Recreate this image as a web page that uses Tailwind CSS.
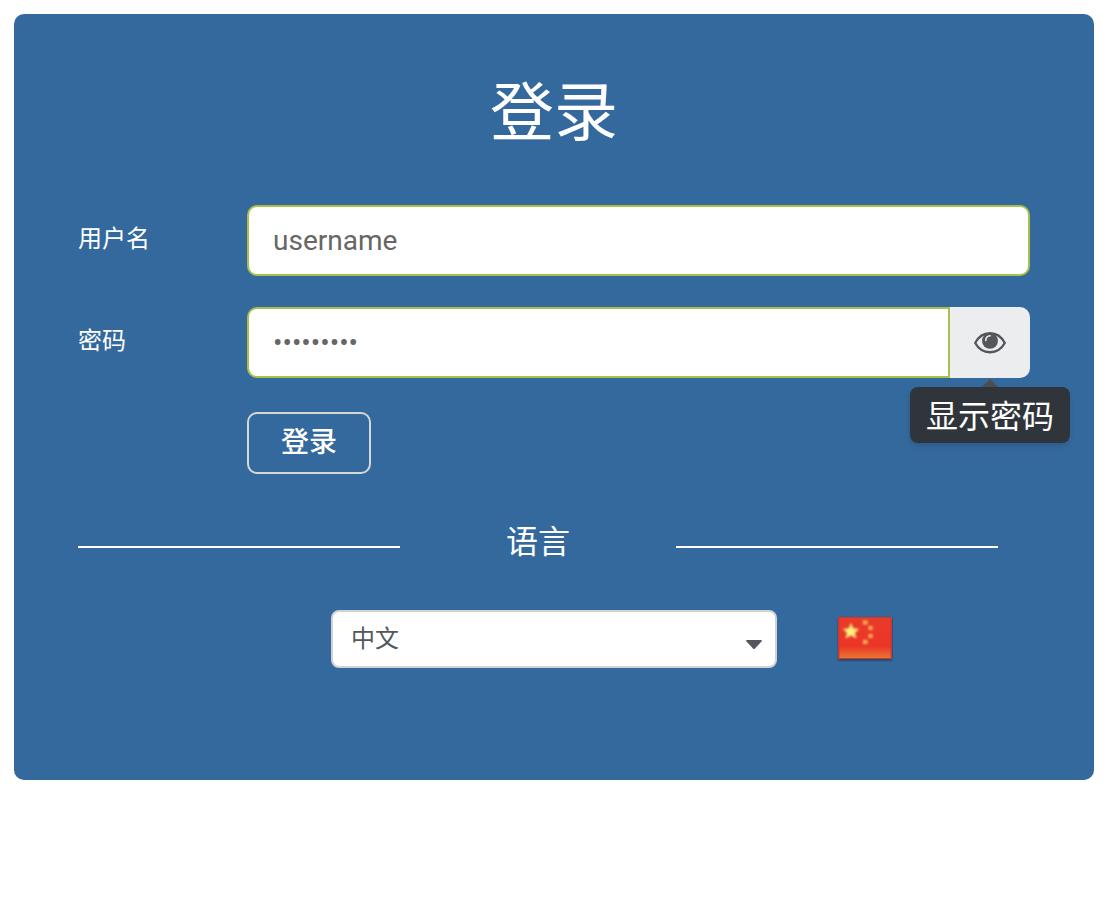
<!DOCTYPE html>
<html lang="zh-CN">
<head>
    <meta charset="UTF-8">
    <meta name="viewport" content="width=device-width, initial-scale=1.0">
    <title>登录</title>
    <script src="https://cdn.jsdelivr.net/npm/@tailwindcss/browser@4"></script>
</head>
<body class="bg-white p-3.5 font-[Roboto,'Noto_Sans_CJK_SC',sans-serif] text-white">
    <main class="rounded-[10px] bg-[#34699d] px-16 pt-14 pb-28">
        <h1 class="mb-[47px] text-center text-[64px] leading-[88px]">登录</h1>

        <form>
            <div class="mb-[31px] flex items-center">
                <label for="username" class="w-[169px] shrink-0 pb-1 text-2xl">用户名</label>
                <input id="username" type="text" placeholder="username" class="h-[71px] min-w-0 flex-1 rounded-[10px] border-2 border-[#a9c14a] bg-white px-6 text-[28px] text-[#666] placeholder:text-[#666] outline-none">
            </div>

            <div class="mb-[34px] flex items-center">
                <label for="password" class="w-[169px] shrink-0 pb-1 text-2xl">密码</label>
                <div class="flex h-[71px] min-w-0 flex-1">
                    <input id="password" type="password" value="password1" class="min-w-0 flex-1 rounded-l-[10px] border-2 border-[#a9c14a] bg-white px-6 text-[28px] text-[#666] outline-none">
                    <div class="relative">
                        <button type="button" id="toggle" aria-label="显示密码" aria-describedby="tip" class="flex h-full w-20 items-center justify-center rounded-r-[10px] bg-[#ecedef]">
                            <svg class="h-6 w-8" viewBox="0 0 32 24" fill="none">
                                <path d="M1.200 12C8 -1 24 -1 30.800 12C24 24.300 8 24.300 1.200 12Z" stroke="#53575b" stroke-width="2.300" stroke-linejoin="round"/>
                                <circle cx="16" cy="9.800" r="8" fill="#53575b"/>
                                <path d="M11.800 9.500C11.800 6.500 13.500 5 16.200 4.800" stroke="#ecedef" stroke-width="1.600" stroke-linecap="round"/>
                            </svg>
                        </button>
                        <div id="tip" role="tooltip" class="absolute top-20 left-1/2 -translate-x-1/2 rounded-lg bg-[#30353b] px-4 pt-1 text-[32px] leading-[52px] whitespace-nowrap shadow-md">
                            <svg class="absolute -top-2 left-1/2 h-2 w-4 -translate-x-1/2" viewBox="0 0 16 8"><path d="M0 8L8 0L16 8Z" fill="#4d4d4d"/></svg>
                            显示密码
                        </div>
                    </div>
                </div>
            </div>

            <button type="submit" class="ml-[169px] rounded-[10px] border-2 border-[#d6d6d6] px-8 text-[28px] leading-[58px] font-medium">登录</button>
        </form>

        <div class="mt-11 mr-8 grid grid-cols-[35fr_30fr_35fr] items-center">
            <hr class="mt-2.5 border-t-2 border-white">
            <h2 class="text-center text-[32px] leading-[48px]">语言</h2>
            <hr class="mt-2.5 border-t-2 border-white">
        </div>

        <div class="mt-11 flex items-center">
            <div class="relative ml-[253px] w-[446px]">
                <select aria-label="语言" class="h-[58px] w-full appearance-none rounded-lg border-2 border-[#d2d2d2] bg-white px-[18px] text-2xl text-[#53575b] outline-none">
                    <option>中文</option>
                </select>
                <svg class="pointer-events-none absolute top-[30px] right-[15px] h-2.5 w-4" viewBox="0 0 16 10"><path d="M1 0H15Q16.500 .3 15.500 1.500L9 8.500Q8 9.500 7 8.500L.5 1.500Q-.5 .3 1 0Z" fill="#53575b"/></svg>
            </div>
            <svg class="ml-[60px] h-[46px] w-14" viewBox="0 0 56 46" role="img" aria-label="中国">
                <defs>
                    <linearGradient id="red" x1="0" y1="0" x2="0" y2="1">
                        <stop offset="0" stop-color="#e93a2a"/>
                        <stop offset=".7" stop-color="#ec3527"/>
                        <stop offset="1" stop-color="#e87532"/>
                    </linearGradient>
                    <filter id="soft" x="-10%" y="-10%" width="120%" height="120%"><feGaussianBlur stdDeviation=".8"/></filter>
                </defs>
                <rect x="1" y="2" width="54.500" height="42.500" rx="1" fill="#263f5c" filter="url(#soft)"/>
                <rect x="1" y="1" width="54" height="42" fill="#c9392f"/>
                <rect x="2.500" y="2" width="51" height="40" fill="url(#red)"/>
                <g filter="url(#soft)">
                    <path d="M14 7L16.300 12.200L22 13L18 17L19.500 22.500L14 19.500L8.500 22.500L10 17L6 13L11.700 12.200Z" fill="#fff07a"/>
                    <g fill="#f9b552">
                        <rect x="26" y="4.500" width="4.500" height="4"/>
                        <rect x="31.500" y="10" width="4" height="4"/>
                        <rect x="31.500" y="18" width="4" height="4"/>
                        <rect x="26" y="24" width="4.500" height="4"/>
                    </g>
                </g>
            </svg>
        </div>
    </main>

    <script>
        document.getElementById('toggle').addEventListener('click', function() {
            const field = document.getElementById('password');
            field.type = field.type === 'password' ? 'text' : 'password';
        });
    </script>
</body>
</html>
